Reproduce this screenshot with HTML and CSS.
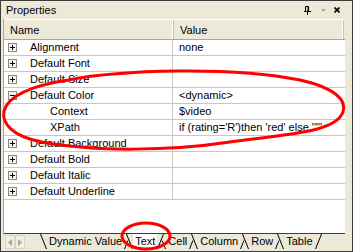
FILE: index.html
```html
<!DOCTYPE html>
<html lang="en">

<head>
    <meta charset="UTF-8">
    <title>Properties</title>
    <link rel="stylesheet" href="styles.css">
</head>

<body>
    <div class="panel">
        <div class="titlebar">
            <span class="title">Properties</span>
            <span class="title-buttons">
                <svg class="pin" width="7" height="9" viewBox="0 0 7 9"><path d="M1.5 0.5h3v5h-3z M4 1v4" fill="none" stroke="#000"/><path d="M0 5.5h7 M3.5 6v3" stroke="#000"/></svg>
                <svg class="drop" width="5" height="3" viewBox="0 0 5 3"><path d="M0 0h5l-2.5 3z" fill="#aca899"/></svg>
                <svg class="close" width="6" height="6" viewBox="0 0 6 6"><path d="M0.5 0.5l5 5M5.5 0.5l-5 5" stroke="#000" stroke-width="1.6"/></svg>
            </span>
        </div>

        <div class="grid">
            <div class="grid-head">
                <div class="head-name">Name</div>
                <div class="head-value">Value</div>
            </div>

            <div class="row">
                <div class="cell-name"><svg class="expander" width="9" height="9" viewBox="0 0 9 9"><rect x="0.5" y="0.5" width="8" height="8" fill="#f4f3ee" stroke="#8c8a80"/><path d="M2 4.5h5M4.5 2v5" stroke="#000"/></svg>Alignment</div>
                <div class="cell-value">none</div>
            </div>
            <div class="row">
                <div class="cell-name"><svg class="expander" width="9" height="9" viewBox="0 0 9 9"><rect x="0.5" y="0.5" width="8" height="8" fill="#f4f3ee" stroke="#8c8a80"/><path d="M2 4.5h5M4.5 2v5" stroke="#000"/></svg>Default Font</div>
                <div class="cell-value"></div>
            </div>
            <div class="row">
                <div class="cell-name"><svg class="expander" width="9" height="9" viewBox="0 0 9 9"><rect x="0.5" y="0.5" width="8" height="8" fill="#f4f3ee" stroke="#8c8a80"/><path d="M2 4.5h5M4.5 2v5" stroke="#000"/></svg>Default Size</div>
                <div class="cell-value"></div>
            </div>
            <div class="row">
                <div class="cell-name"><svg class="expander" width="9" height="9" viewBox="0 0 9 9"><rect x="0.5" y="0.5" width="8" height="8" fill="#f4f3ee" stroke="#8c8a80"/><path d="M2 4.5h5" stroke="#000"/></svg>Default Color</div>
                <div class="cell-value">&lt;dynamic&gt;</div>
            </div>
            <div class="row">
                <div class="cell-name sub">Context</div>
                <div class="cell-value">$video</div>
            </div>
            <div class="row">
                <div class="cell-name sub">XPath</div>
                <div class="cell-value">if (rating='R')then 'red' else ''"'</div>
            </div>
            <div class="row">
                <div class="cell-name"><svg class="expander" width="9" height="9" viewBox="0 0 9 9"><rect x="0.5" y="0.5" width="8" height="8" fill="#f4f3ee" stroke="#8c8a80"/><path d="M2 4.5h5M4.5 2v5" stroke="#000"/></svg>Default Background</div>
                <div class="cell-value"></div>
            </div>
            <div class="row">
                <div class="cell-name"><svg class="expander" width="9" height="9" viewBox="0 0 9 9"><rect x="0.5" y="0.5" width="8" height="8" fill="#f4f3ee" stroke="#8c8a80"/><path d="M2 4.5h5M4.5 2v5" stroke="#000"/></svg>Default Bold</div>
                <div class="cell-value"></div>
            </div>
            <div class="row">
                <div class="cell-name"><svg class="expander" width="9" height="9" viewBox="0 0 9 9"><rect x="0.5" y="0.5" width="8" height="8" fill="#f4f3ee" stroke="#8c8a80"/><path d="M2 4.5h5M4.5 2v5" stroke="#000"/></svg>Default Italic</div>
                <div class="cell-value"></div>
            </div>
            <div class="row">
                <div class="cell-name"><svg class="expander" width="9" height="9" viewBox="0 0 9 9"><rect x="0.5" y="0.5" width="8" height="8" fill="#f4f3ee" stroke="#8c8a80"/><path d="M2 4.5h5M4.5 2v5" stroke="#000"/></svg>Default Underline</div>
                <div class="cell-value"></div>
            </div>
        </div>

        <div class="tabstrip">
            <span class="scroll-btn"><svg width="4" height="7" viewBox="0 0 4 7"><path d="M4 0v7L0 3.5z" fill="#aca899"/></svg></span>
            <span class="scroll-btn"><svg width="4" height="7" viewBox="0 0 4 7"><path d="M0 0v7l4-3.5z" fill="#aca899"/></svg></span>
            <span class="tabs">
                <svg class="edge" width="7" height="15" viewBox="0 0 7 15"><path d="M0.5 0l6 15" stroke="#000"/></svg>
                <span class="tab">Dynamic Value</span>
                <svg class="edge" width="9" height="15" viewBox="0 0 9 15"><path d="M2.5 0l6 15M0.5 15l3.4-8.5" stroke="#000"/></svg>
                <span class="tab active">Text</span>
                <svg class="edge" width="9" height="15" viewBox="0 0 9 15"><path d="M0.5 15l6-15M8.5 15l-3.4-8.5" stroke="#000"/></svg>
                <span class="tab">Cell</span>
                <svg class="edge" width="9" height="15" viewBox="0 0 9 15"><path d="M2.5 0l6 15M0.5 15l3.4-8.5" stroke="#000"/></svg>
                <span class="tab">Column</span>
                <svg class="edge" width="9" height="15" viewBox="0 0 9 15"><path d="M2.5 0l6 15M0.5 15l3.4-8.5" stroke="#000"/></svg>
                <span class="tab">Row</span>
                <svg class="edge" width="9" height="15" viewBox="0 0 9 15"><path d="M2.5 0l6 15M0.5 15l3.4-8.5" stroke="#000"/></svg>
                <span class="tab">Table</span>
                <svg class="edge" width="7" height="15" viewBox="0 0 7 15"><path d="M0.5 15l6-15" stroke="#000"/></svg>
            </span>
        </div>

        <!-- hand drawn highlight marks -->
        <svg class="marks" width="353" height="252" viewBox="0 0 353 252">
            <path d="M68 80 C120 70 230 66 300 80 C335 88 347 100 343 112 C336 132 290 134 230 142 C170 151 95 152 42 142 C10 136 2 122 4 111 C8 96 30 86 68 80" fill="none" stroke="#ff0000" stroke-width="3"/>
            <ellipse cx="146" cy="236" rx="24" ry="13" fill="none" stroke="#ff0000" stroke-width="3"/>
        </svg>
    </div>
</body>

</html>
```

FILE: styles.css
```css
body {
    margin: 0;
    font-family: "Liberation Sans", Arial, sans-serif;
    font-size: 11px;
    color: #000;
}

.panel {
    position: relative;
    width: 353px;
    height: 252px;
    box-sizing: border-box;
    border: 1px solid #3c3c3c;
    background-color: #ece9d8;
    display: flex;
    flex-direction: column;
}

.titlebar {
    height: 18px;
    flex: none;
    display: flex;
    align-items: center;
    justify-content: space-between;
    padding: 0 12px 0 5px;
}

.title-buttons {
    display: flex;
    align-items: center;
}

.pin {
    margin-right: 10px;
}

.drop {
    margin-right: 8px;
}

.grid {
    height: 214px;
    flex: none;
    margin: 0 7px 0 2px;
    border-left: 1px solid #aca899;
    border-bottom: 1px solid #3c3c3c;
    background-color: white;
}

.grid-head {
    height: 21px;
    display: flex;
    background-color: #ece9d8;
    border-top: 1px solid white;
    border-bottom: 1px solid #aca899;
    box-sizing: border-box;
}

.head-name,
.head-value {
    display: flex;
    align-items: center;
    padding-left: 6px;
    border-right: 1px solid #c6c2b2;
    box-shadow: inset -1px 0 white;
}

.head-name {
    width: 163px;
}

.head-value {
    width: 163px;
}

.row {
    display: flex;
    height: 16px;
    box-sizing: border-box;
    border-bottom: 1px solid #ccc8b8;
    line-height: 15px;
}

.cell-name {
    width: 169px;
    display: flex;
    align-items: center;
    padding-left: 26px;
    box-sizing: border-box;
    border-right: 1px solid #ccc8b8;
    position: relative;
    white-space: nowrap;
}

.cell-name.sub {
    padding-left: 46px;
}

.expander {
    position: absolute;
    left: 4px;
    top: 3px;
}

.cell-value {
    flex: 1;
    padding-left: 6px;
    white-space: nowrap;
}

.tabstrip {
    height: 17px;
    display: flex;
    align-items: flex-start;
    padding-left: 4px;
}

.scroll-btn {
    width: 10px;
    height: 14px;
    margin-top: 1px;
    box-sizing: border-box;
    border: 1px solid #d8d4c4;
    background-color: #f1efe4;
    display: flex;
    align-items: center;
    justify-content: center;
}

.tabs {
    display: flex;
    align-items: flex-start;
    margin-left: 15px;
    height: 15px;
}

.tab {
    line-height: 14px;
    padding: 0 2px;
}

.tab.active {
    background-color: white;
}

.marks {
    position: absolute;
    left: -1px;
    top: -1px;
    pointer-events: none;
}
```
